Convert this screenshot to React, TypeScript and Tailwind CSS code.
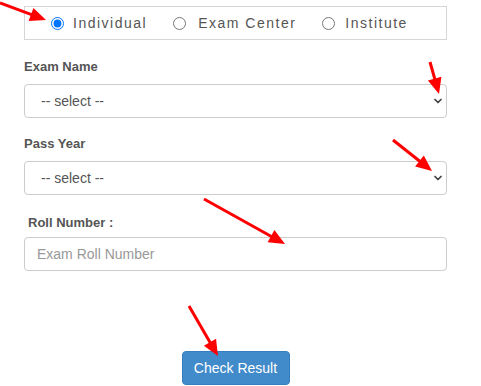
import { ChevronDown } from "lucide-react";

const arrows = [
  { x1: 0, y1: 3, x2: 46, y2: 20 },
  { x1: 430, y1: 62, x2: 439, y2: 94 },
  { x1: 393, y1: 140, x2: 432, y2: 171 },
  { x1: 204, y1: 199, x2: 285, y2: 244 },
  { x1: 189, y1: 306, x2: 218, y2: 356 },
];

function Arrow({ x1, y1, x2, y2 }: { x1: number; y1: number; x2: number; y2: number }) {
  const dx = x2 - x1;
  const dy = y2 - y1;
  const len = Math.hypot(dx, dy);
  const ux = dx / len;
  const uy = dy / len;
  const head = 16;
  const half = 7;
  const bx = x2 - ux * head;
  const by = y2 - uy * head;
  const pts = `${x2},${y2} ${bx - uy * half},${by + ux * half} ${bx + uy * half},${by - ux * half}`;
  return (
    <g>
      <line x1={x1} y1={y1} x2={bx + ux * 2} y2={by + uy * 2} stroke="#f00" strokeWidth={3} />
      <polygon points={pts} fill="#f00" />
    </g>
  );
}

function SelectBox() {
  return (
    <div className="relative">
      <select className="w-full h-[34px] appearance-none rounded-[4px] border border-[#ccc] bg-white pl-[16px] text-[14px] text-[#555] outline-none">
        <option>-- select --</option>
      </select>
      <ChevronDown
        className="absolute right-[3px] top-[11px] text-[#444] pointer-events-none"
        size={12}
        strokeWidth={3.5}
      />
    </div>
  );
}

export default function App() {
  return (
    <div className="relative w-[481px] h-[386px] overflow-hidden bg-white" style={{ fontFamily: '"Liberation Sans", Arial, sans-serif' }}>
      <div className="ml-[24px] w-[423px] pt-[6px]">
        <div className="h-[34px] border border-[#d6d6d6] flex items-center pl-[26px] text-[14px] text-[#555] tracking-[1.5px]">
          <label className="flex items-center">
            <input type="radio" name="type" defaultChecked className="w-[13px] h-[13px] m-0" />
            <span className="ml-[9px]">Individual</span>
          </label>
          <label className="flex items-center ml-[26px]">
            <input type="radio" name="type" className="w-[13px] h-[13px] m-0" />
            <span className="ml-[12px]">Exam Center</span>
          </label>
          <label className="flex items-center ml-[26px]">
            <input type="radio" name="type" className="w-[13px] h-[13px] m-0" />
            <span className="ml-[10px]">Institute</span>
          </label>
        </div>

        <div className="mt-[17px] text-[13px] font-bold text-[#555] leading-[20px]">Exam Name</div>
        <div className="mt-[7px]">
          <SelectBox />
        </div>

        <div className="mt-[16px] text-[13px] font-bold text-[#555] leading-[20px]">Pass Year</div>
        <div className="mt-[7px]">
          <SelectBox />
        </div>

        <div className="mt-[18px] pl-[4px] text-[13px] font-bold text-[#555] leading-[20px]">Roll Number :</div>
        <input
          type="text"
          placeholder="Exam Roll Number"
          className="mt-[4px] w-full h-[34px] rounded-[4px] border border-[#ccc] px-[12px] text-[14px] text-[#555] placeholder:text-[#999] outline-none"
        />

        <div className="mt-[80px] flex justify-center">
          <button className="w-[108px] h-[34px] rounded-[4px] border border-[#357ebd] bg-[#428bca] text-[14px] text-white">
            Check Result
          </button>
        </div>
      </div>

      <svg className="absolute inset-0 pointer-events-none" width={481} height={386}>
        {arrows.map((a, i) => (
          <Arrow key={i} {...a} />
        ))}
      </svg>
    </div>
  );
}
